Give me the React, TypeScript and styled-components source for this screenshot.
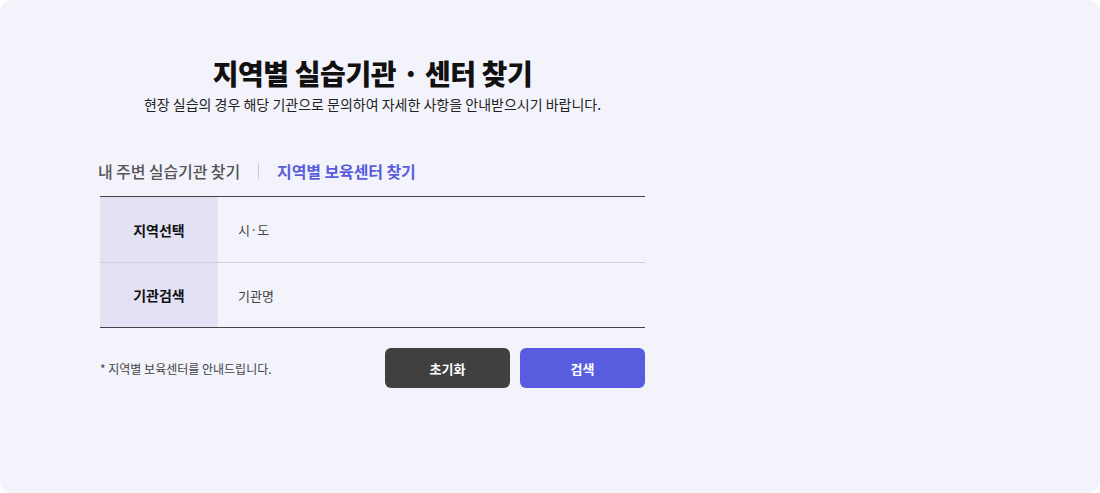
import React, { useState } from 'react';
import styled, { createGlobalStyle } from 'styled-components';

const GlobalStyle = createGlobalStyle`
  html, body {
    margin: 0;
    padding: 0;
    background: #ffffff;
    font-family: 'Noto Sans CJK KR', 'Noto Sans', sans-serif;
  }
  * { box-sizing: border-box; }
`;

const rows = [
  { label: '지역선택', value: '시·도' },
  { label: '기관검색', value: '기관명' },
];

const App = () => {
  const [tab, setTab] = useState(1);

  return (
    <>
      <GlobalStyle />
      <Panel>
        <Content>
          <Header>
            <Title>지역별 실습기관 · 센터 찾기</Title>
            <Sub>현장 실습의 경우 해당 기관으로 문의하여 자세한 사항을 안내받으시기 바랍니다.</Sub>
          </Header>
          <Tabs>
            <Tab active={tab === 0} onClick={() => setTab(0)}>
              내 주변 실습기관 찾기
            </Tab>
            <Divider />
            <Tab active={tab === 1} onClick={() => setTab(1)}>
              지역별 보육센터 찾기
            </Tab>
          </Tabs>
          <Table>
            {rows.map((row) => (
              <Row key={row.label}>
                <Label>{row.label}</Label>
                <Value>{row.value}</Value>
              </Row>
            ))}
          </Table>
          <Footer>
            <Note>* 지역별 보육센터를 안내드립니다.</Note>
            <Buttons>
              <Button variant="dark">초기화</Button>
              <Button variant="primary">검색</Button>
            </Buttons>
          </Footer>
        </Content>
      </Panel>
    </>
  );
};

export default App;

const Panel = styled.div`
  width: 1100px;
  height: 493px;
  background: #f3f3fb;
  border-radius: 12px;
  padding: 52px 0 0 100px;
`;

const Content = styled.div`
  width: 545px;
  display: flex;
  flex-direction: column;
`;

const Header = styled.div`
  display: flex;
  flex-direction: column;
  align-items: center;
`;

const Title = styled.h1`
  margin: 0;
  font-size: 28px;
  font-weight: 800;
  line-height: 42px;
  letter-spacing: -0.4px;
  color: #111;
`;

const Sub = styled.p`
  margin: 0;
  font-size: 14px;
  line-height: 20px;
  letter-spacing: 0;
  color: #222;
`;

const Tabs = styled.div`
  display: flex;
  align-items: center;
  margin: 45px 0 0 -2px;
  height: 24px;
`;

const Tab = styled.button<{ active: boolean }>`
  border: none;
  background: none;
  padding: 0;
  font-family: inherit;
  font-size: 16px;
  letter-spacing: -0.1px;
  font-weight: ${(p) => (p.active ? 700 : 500)};
  color: ${(p) => (p.active ? '#5a5de0' : '#555')};
  cursor: pointer;
`;

const Divider = styled.span`
  width: 1px;
  height: 16px;
  background: #ccc;
  margin: 0 18px;
`;

const Table = styled.div`
  margin-top: 13px;
  border-top: 1px solid #444;
  border-bottom: 1px solid #444;
`;

const Row = styled.div`
  display: grid;
  grid-template-columns: 118px 1fr;
  height: 65px;
  & + & {
    border-top: 1px solid #cfcfdf;
  }
`;

const Label = styled.div`
  background: #e2e2f4;
  display: flex;
  align-items: center;
  justify-content: center;
  font-size: 14px;
  font-weight: 700;
  color: #111;
`;

const Value = styled.div`
  display: flex;
  align-items: center;
  padding-left: 20px;
  font-size: 13px;
  color: #444;
`;

const Footer = styled.div`
  display: flex;
  align-items: center;
  justify-content: space-between;
  margin-top: 20px;
`;

const Note = styled.span`
  font-size: 12px;
  letter-spacing: 0;
  color: #444;
`;

const Buttons = styled.div`
  display: flex;
  gap: 10px;
`;

const Button = styled.button<{ variant: 'dark' | 'primary' }>`
  width: 125px;
  height: 40px;
  border: none;
  border-radius: 6px;
  font-family: inherit;
  font-size: 13px;
  font-weight: 700;
  color: #fff;
  background: ${(p) => (p.variant === 'dark' ? '#404040' : '#585de0')};
  cursor: pointer;
`;
